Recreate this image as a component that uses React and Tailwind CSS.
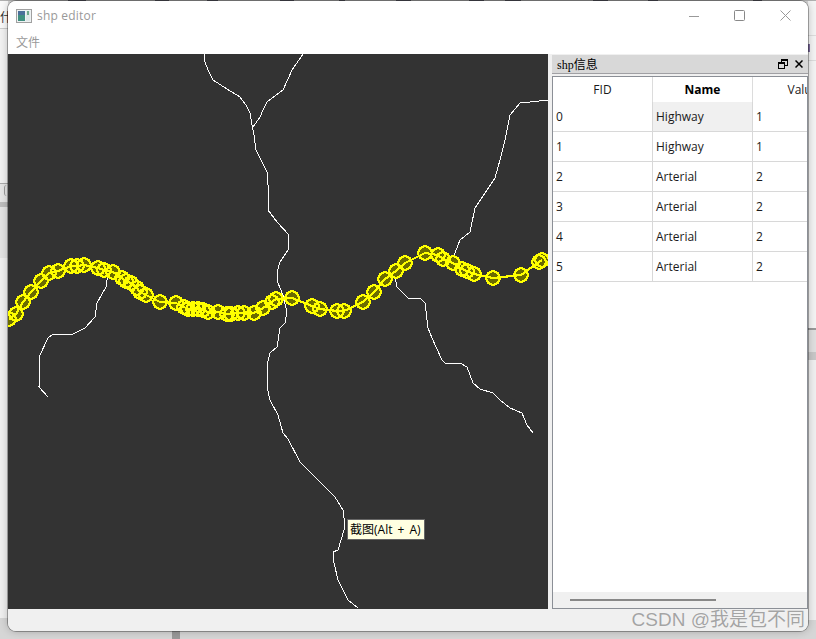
import React from 'react';

const roads = [
  '204,54 205,62 208,70 213,80 227,89 240,97 246,105 250,113 252,125 254,135 256,150 261,160 267,172 268,185 268,210 277,222 289,235 288,250 280,262 277,272 278,283 283,295 287,312 285,323 280,328 277,347 270,353 267,365 267,387 270,400 278,415 283,433 288,439 300,462 320,482 335,497 343,510 345,525 344,530 338,550 333,552 334,563 338,580 348,600 358,608',
  '303,54 292,70 283,90 267,102 263,110 260,117 253,127',
  '549,100 520,103 510,115 505,140 500,160 495,178 475,208 470,232 460,240 455,253 453,262',
  '395,272 395,277 397,287 402,292 408,298 420,298 425,303 428,328 432,338 442,360 445,363 460,363 467,367 473,383 480,389 493,393 500,400 510,408 522,413 527,425 533,433',
  '108,273 106,287 97,303 95,317 85,328 73,334 53,334 48,338 40,355 39,387 48,397',
];

const points = [
  [9, 319], [16, 314], [23, 302], [31, 292], [41, 281], [49, 273], [58, 271], [71, 266], [77, 266], [84, 265],
  [98, 268], [104, 270], [113, 272], [122, 278], [126, 281], [131, 283], [137, 288], [140, 292], [146, 295], [160, 302],
  [176, 303], [184, 307], [188, 309], [193, 309], [198, 309], [203, 310], [208, 312], [218, 312], [227, 314], [231, 314],
  [238, 313], [244, 313], [254, 313], [263, 308], [272, 302], [276, 299], [292, 298], [312, 306], [320, 309], [337, 311],
  [344, 311], [363, 302], [374, 292], [385, 279], [396, 271], [405, 263], [425, 253], [438, 255], [443, 259], [453, 263],
  [462, 269], [467, 271], [474, 274], [493, 278], [521, 275], [539, 262], [542, 260],
];

const rows = [
  ['0', 'Highway', '1'],
  ['1', 'Highway', '1'],
  ['2', 'Arterial', '2'],
  ['3', 'Arterial', '2'],
  ['4', 'Arterial', '2'],
  ['5', 'Arterial', '2'],
];

// bits of the window behind that stick out along the top edge
const topMarks = [
  'left-[68px] w-[18px]', 'left-[155px] w-[14px]', 'left-[207px] w-[11px]', 'left-[280px] w-[14px]',
  'left-[339px] w-[6px]', 'left-[396px] w-[15px]', 'left-[469px] w-[15px]', 'left-[505px] w-[16px]',
  'left-[593px] w-[15px]', 'left-[648px] w-[10px]', 'left-[753px] w-[9px]',
];

const uiFont = "font-['Open_Sans','Noto_Sans_CJK_SC',sans-serif]";

const MapCanvas = () => (
  <div className="relative w-[540px] shrink-0 bg-[#333333] overflow-hidden">
    <svg className="block w-[540px] h-[555px]" viewBox="8 54 540 555" shapeRendering="crispEdges">
      {roads.map((r, i) => (
        <polyline key={i} points={r} fill="none" stroke="#ffffff" strokeWidth="1" />
      ))}
      {points.map(([x, y], i) => (
        <circle key={i} cx={x} cy={y} r="6.8" fill="#6b6b00" />
      ))}
      {points.map(([x, y], i) => (
        <circle key={i} cx={x} cy={y} r="6.8" fill="none" stroke="#ffff00" strokeWidth="2.2" />
      ))}
      <polyline points={points.map((p) => p.join(',')).join(' ')} fill="none" stroke="#ffff00" strokeWidth="2.2" />
    </svg>
    <div className="absolute left-[339px] top-[465px] w-[78px] h-[21px] bg-[#ffffe1] border border-[#666666] pl-[2px] text-[12px] leading-[20px] text-black whitespace-nowrap [word-spacing:2px] font-['Open_Sans','Noto_Sans_CJK_SC',sans-serif]">
      截图(Alt + A)
    </div>
  </div>
);

const InfoDock = () => (
  <div className="ml-[4px] flex-1 min-w-0 flex flex-col">
    <div className="mt-[1px] h-[19px] shrink-0 bg-[#d8d8d8] border-b border-[#a0a0a4] flex items-center pl-[5px] pr-[5px]">
      <span className="mt-[2px] text-[12px] text-black font-['Liberation_Serif','Noto_Sans_CJK_SC',serif]">shp信息</span>
      <svg className="ml-auto" width="10" height="10" viewBox="0 0 10 10" fill="none" stroke="#000000" strokeWidth="1" shapeRendering="crispEdges">
        <rect x="0.5" y="3.5" width="6" height="6" />
        <path d="M0 4.5H7M3.5 3V0.5H9.5V6.5H7M3 1.5H10" />
      </svg>
      <svg className="ml-[7px]" width="8" height="8" viewBox="0 0 8 8" fill="none" stroke="#000000" strokeWidth="1.5">
        <path d="M0.5 0.5L7.5 7.5M7.5 0.5L0.5 7.5" />
      </svg>
    </div>
    <div className={`mt-[2px] flex-1 min-h-0 border border-[#8b8f96] bg-white flex flex-col overflow-hidden text-[12px] text-[#1a1a1a] ${uiFont}`}>
      <div className="flex h-[25px] shrink-0">
        <div className="w-[100px] shrink-0 border-r border-[#dcdcdc] flex items-center justify-center">FID</div>
        <div className="w-[100px] shrink-0 border-r border-[#dcdcdc] flex items-center justify-center font-bold text-black">Name</div>
        <div className="w-[100px] shrink-0 flex items-center justify-center">Value</div>
      </div>
      {rows.map((r, i) => (
        <div key={i} className="flex shrink-0 h-[30px] border-b border-[#d8d8d8]">
          <div className="w-[100px] shrink-0 pl-[3px] border-r border-[#d8d8d8] flex items-center">{r[0]}</div>
          <div className={`w-[100px] shrink-0 pl-[3px] border-r border-[#d8d8d8] flex items-center ${i === 0 ? 'bg-[#f0f0f0]' : ''}`}>{r[1]}</div>
          <div className="w-[100px] shrink-0 pl-[3px] flex items-center">{r[2]}</div>
        </div>
      ))}
      <div className="flex-1" />
      <div className="h-[16px] shrink-0 bg-[#f0f0f0] flex items-center pl-[17px]">
        <div className="w-[146px] h-[2px] bg-[#888888]" />
      </div>
    </div>
  </div>
);

const WindowFrame = () => (
  <div className="absolute left-[8px] top-[1px] w-[800px] h-[630px] rounded-lg overflow-hidden bg-[#f0f0f0] flex flex-col shadow-[0_0_0_1px_rgba(0,0,0,0.3),0_0_8px_rgba(0,0,0,0.25)]">
    <div className={`h-[30px] shrink-0 bg-white flex items-center pl-[8px] text-[12px] text-[#999999] ${uiFont}`}>
      <svg width="16" height="16" viewBox="0 0 16 16" shapeRendering="crispEdges">
        <rect x="0.5" y="1.5" width="15" height="13" fill="#eef2f3" stroke="#a0a0a0" />
        <rect x="2" y="3" width="7" height="10" fill="#3f8f80" />
        <rect x="2" y="3" width="7" height="4" fill="#4a6f9a" />
        <rect x="10" y="3" width="4" height="10" fill="#dfe6e8" />
        <rect x="11" y="3" width="2" height="4" fill="#6fa98a" />
      </svg>
      <span className="ml-[5px] tracking-[0.2px]">shp editor</span>
      <svg className="ml-auto mr-[109px]" width="10" height="10" viewBox="0 0 10 10" stroke="#999999" fill="none" shapeRendering="crispEdges">
        <path d="M0 5.5H10" />
      </svg>
      <svg className="absolute left-[726px] top-[9px]" width="11" height="11" viewBox="0 0 11 11" stroke="#888888" fill="none">
        <rect x="0.5" y="0.5" width="10" height="10" rx="1" />
      </svg>
      <svg className="absolute left-[772px] top-[9px]" width="11" height="11" viewBox="0 0 11 11" stroke="#999999" fill="none">
        <path d="M0.5 0.5L10.5 10.5M10.5 0.5L0.5 10.5" />
      </svg>
    </div>
    <div className={`h-[23px] shrink-0 bg-white pl-[8px] flex items-center text-[12px] text-[#999999] ${uiFont}`}>文件</div>
    <div className="h-[555px] shrink-0 flex">
      <MapCanvas />
      <InfoDock />
    </div>
    <div className="flex-1 bg-[#f0f0f0]" />
    <div className="absolute right-[3px] bottom-[-1px] text-[19px] leading-[24px] text-[#a4a4a4] whitespace-nowrap [text-shadow:0_0_1px_#ffffff] font-['Liberation_Sans','Noto_Sans_CJK_SC',sans-serif]">
      CSDN @我是包不同
    </div>
  </div>
);

const Desktop = () => (
  <div className="absolute inset-0 bg-[#d6d6d6] overflow-hidden">
    <div className="absolute left-0 top-0 w-full h-[1px] bg-[#b0b0b0]" />
    {topMarks.map((m, i) => (
      <div key={i} className={`absolute top-0 h-[1px] bg-[#55555f] ${m}`} />
    ))}
    <div className="absolute left-0 top-[1px] w-[8px] h-[27px] bg-[#fafafa]" />
    <div className="absolute left-0 top-[8px] text-[12px] text-[#333333] font-['Noto_Sans_CJK_SC',sans-serif]">什</div>
    <div className="absolute left-0 top-[28px] w-[8px] h-[155px] bg-[#f2f2f2] border-t border-[#cccccc]" />
    <div className="absolute left-0 top-[183px] w-[8px] h-[19px] bg-[#e6e6e6] border-t border-[#aaaaaa]" />
    <div className="absolute left-[4px] top-[185px] w-[3px] h-[11px] rounded-l border-l border-[#999999]" />
    <div className="absolute left-0 top-[202px] w-[8px] h-[5px] bg-[#bdbdbd]" />
    <div className="absolute left-0 top-[207px] w-[8px] h-[51px] bg-[#e4e4e4]" />
    <div className="absolute left-0 top-[258px] w-[8px] h-[360px] bg-[#f0f0f0]" />
    <div className="absolute right-0 top-[1px] w-[8px] h-[327px] bg-[#f4f4f4]" />
    <div className="absolute right-0 top-[35px] w-[8px] h-[1px] bg-[#dddddd]" />
    <div className="absolute right-[6px] top-[44px] w-[2px] h-[8px] bg-[#7a6a9a]" />
    <div className="absolute right-0 top-[60px] w-[8px] h-[1px] bg-[#dddddd]" />
    <div className="absolute right-0 top-[328px] w-[8px] h-[24px] bg-[#e0e0e0] border-t-2 border-[#999999]" />
    <div className="absolute right-0 top-[352px] w-[8px] h-[8px] bg-[#c8c8c8]" />
    <div className="absolute right-0 top-[360px] w-[8px] h-[260px] bg-[#f0f0f0]" />
    <div className="absolute left-[172px] bottom-0 w-[8px] h-[8px] bg-[#999999]" />
  </div>
);

export default function App() {
  return (
    <div className="relative w-[816px] h-[639px] overflow-hidden">
      <Desktop />
      <WindowFrame />
    </div>
  );
}
